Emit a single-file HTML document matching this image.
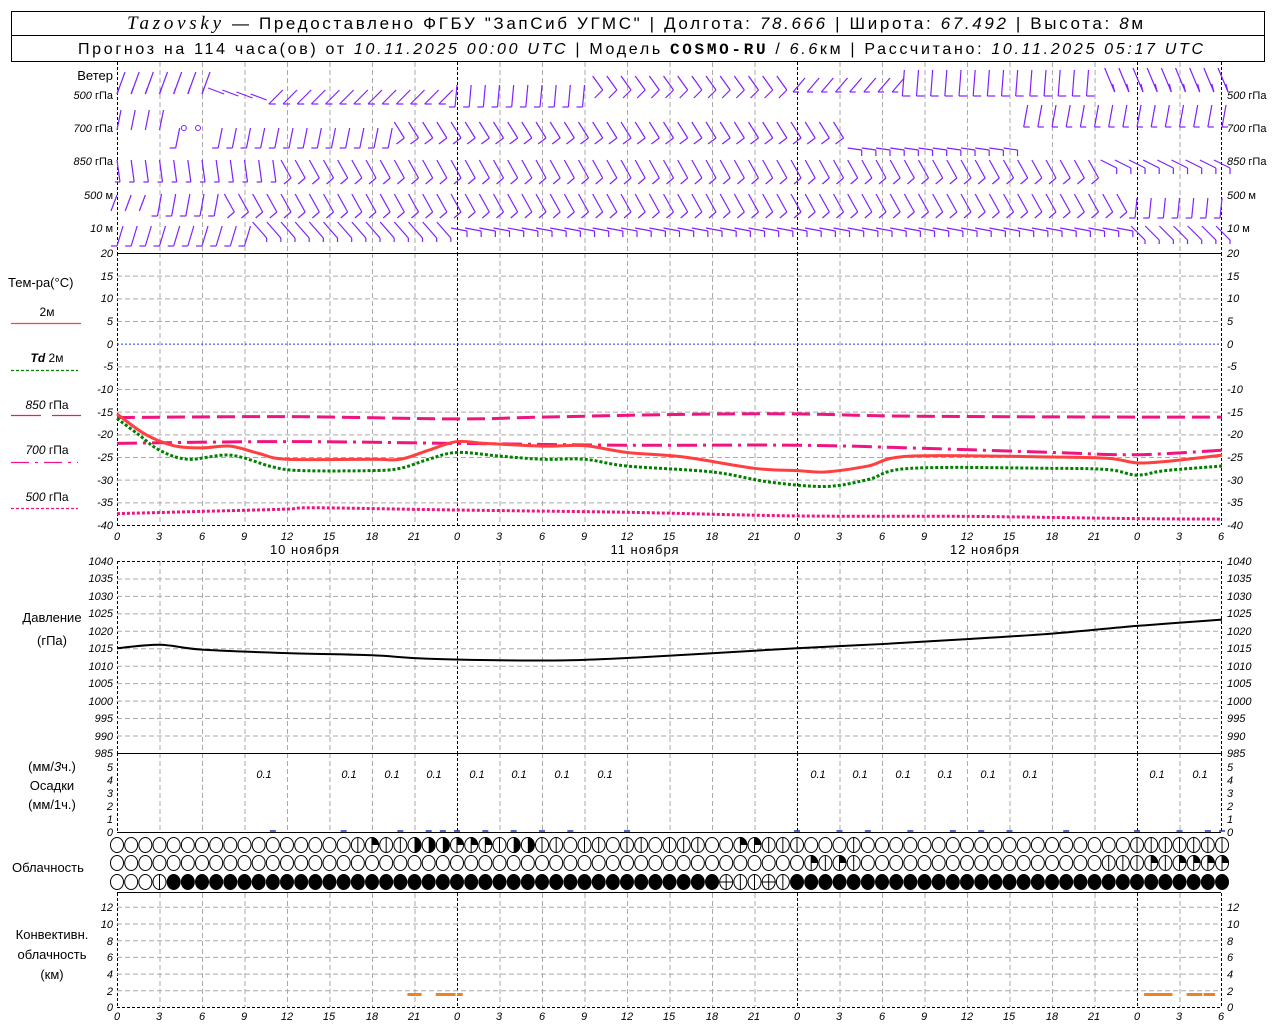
<!DOCTYPE html>
<html><head><meta charset="utf-8"><style>
html,body{margin:0;padding:0;background:#fff;}
svg{display:block;font-family:"Liberation Sans",sans-serif;}
.it{font-style:italic;}
.ax{font-size:11px;font-style:italic;}
.lb{font-size:13px;}
</style></head><body>
<svg id="s" width="1280" height="1024" viewBox="0 0 1280 1024" xmlns="http://www.w3.org/2000/svg">
<rect x="0" y="0" width="1280" height="1024" fill="#fff"/>
<rect x="11.5" y="11.5" width="1253" height="50" fill="none" stroke="#000"/>
<line x1="11" y1="35.5" x2="1265" y2="35.5" stroke="#000"/>
<g font-size="17">
<text x="127" y="29" font-family="Liberation Serif,serif" font-style="italic" font-size="19" textLength="94" lengthAdjust="spacing">Tazovsky</text>
<text x="232" y="29" textLength="911" lengthAdjust="spacing">— Предоставлено ФГБУ "ЗапСиб УГМС" | Долгота: <tspan class="it">78.666</tspan> | Широта: <tspan class="it">67.492</tspan> | Высота: <tspan class="it">8</tspan>м</text>
</g>
<g font-size="16">
<text x="78" y="54" textLength="1125" lengthAdjust="spacing">Прогноз на 114 часа(ов) от <tspan class="it">10.11.2025 00:00 UTC</tspan>  | Модель <tspan font-family="Liberation Mono,monospace" font-weight="bold">COSMO-RU</tspan> / <tspan class="it">6.6</tspan>км | Рассчитано: <tspan class="it">10.11.2025 05:17 UTC</tspan></text>
</g>
<g id="grid"></g>
<g id="data"></g>
<g class="lb">
<text x="113" y="80" text-anchor="end">Ветер</text>
<g class="ax" font-size="12">
<text x="113" y="99" text-anchor="end">500 <tspan font-style="normal">гПа</tspan></text>
<text x="113" y="132" text-anchor="end">700 <tspan font-style="normal">гПа</tspan></text>
<text x="113" y="165" text-anchor="end">850 <tspan font-style="normal">гПа</tspan></text>
<text x="113" y="199" text-anchor="end">500 <tspan font-style="normal">м</tspan></text>
<text x="113" y="232" text-anchor="end">10 <tspan font-style="normal">  м</tspan></text>
<text x="1227" y="99">500 <tspan font-style="normal">гПа</tspan></text>
<text x="1227" y="132">700 <tspan font-style="normal">гПа</tspan></text>
<text x="1227" y="165">850 <tspan font-style="normal">гПа</tspan></text>
<text x="1227" y="199">500 <tspan font-style="normal">м</tspan></text>
<text x="1227" y="232">10 <tspan font-style="normal">  м</tspan></text>
</g>
<text x="8" y="287">Тем-ра(°C)</text>
<text x="47" y="316" font-size="12" text-anchor="middle">2м</text>
<text x="47" y="362" font-size="12" text-anchor="middle"><tspan class="it" font-weight="bold">Td</tspan>  2м</text>
<text x="47" y="409" font-size="12" text-anchor="middle"><tspan class="it">850</tspan> гПа</text>
<text x="47" y="454" font-size="12" text-anchor="middle"><tspan class="it">700</tspan> гПа</text>
<text x="47" y="501" font-size="12" text-anchor="middle"><tspan class="it">500</tspan> гПа</text>
<text x="52" y="622" text-anchor="middle">Давление</text>
<text x="52" y="645" text-anchor="middle">(гПа)</text>
<text x="52" y="771" text-anchor="middle">(мм/<tspan class="it">3</tspan>ч.)</text>
<text x="52" y="790" text-anchor="middle">Осадки</text>
<text x="52" y="809" text-anchor="middle">(мм/1ч.)</text>
<text x="12" y="872">Облачность</text>
<text x="52" y="939" text-anchor="middle">Конвективн.</text>
<text x="52" y="959" text-anchor="middle">облачность</text>
<text x="52" y="979" text-anchor="middle">(км)</text>
<text x="305" y="554" text-anchor="middle" letter-spacing="1">10 ноября</text>
<text x="645" y="554" text-anchor="middle" letter-spacing="1">11 ноября</text>
<text x="985" y="554" text-anchor="middle" letter-spacing="1">12 ноября</text>
</g>
<g stroke-width="1.3">
<line x1="11" y1="323.5" x2="81" y2="323.5" stroke="#ff4040"/>
<line x1="11" y1="370.5" x2="78" y2="370.5" stroke="#008000" stroke-dasharray="3,2"/>
<line x1="11" y1="415.5" x2="41" y2="415.5" stroke="#f01480"/><line x1="52" y1="415.5" x2="81" y2="415.5" stroke="#f01480"/>
<line x1="11" y1="462.5" x2="78" y2="462.5" stroke="#f01480" stroke-dasharray="18,6,3,6"/>
<line x1="11" y1="508.5" x2="78" y2="508.5" stroke="#f01480" stroke-dasharray="3,2"/>
</g>
<g class="ax" font-size="13">
<text x="264" y="778" text-anchor="middle">0.1</text><text x="349" y="778" text-anchor="middle">0.1</text><text x="392" y="778" text-anchor="middle">0.1</text><text x="434" y="778" text-anchor="middle">0.1</text><text x="477" y="778" text-anchor="middle">0.1</text><text x="519" y="778" text-anchor="middle">0.1</text><text x="562" y="778" text-anchor="middle">0.1</text><text x="605" y="778" text-anchor="middle">0.1</text><text x="818" y="778" text-anchor="middle">0.1</text><text x="860" y="778" text-anchor="middle">0.1</text><text x="903" y="778" text-anchor="middle">0.1</text><text x="945" y="778" text-anchor="middle">0.1</text><text x="988" y="778" text-anchor="middle">0.1</text><text x="1030" y="778" text-anchor="middle">0.1</text><text x="1157" y="778" text-anchor="middle">0.1</text><text x="1200" y="778" text-anchor="middle">0.1</text>
</g>
<g class="ax" font-size="14">
<text x="117" y="540" text-anchor="middle">0</text><text x="159" y="540" text-anchor="middle">3</text><text x="202" y="540" text-anchor="middle">6</text><text x="244" y="540" text-anchor="middle">9</text><text x="287" y="540" text-anchor="middle">12</text><text x="329" y="540" text-anchor="middle">15</text><text x="372" y="540" text-anchor="middle">18</text><text x="414" y="540" text-anchor="middle">21</text><text x="457" y="540" text-anchor="middle">0</text><text x="499" y="540" text-anchor="middle">3</text><text x="542" y="540" text-anchor="middle">6</text><text x="584" y="540" text-anchor="middle">9</text><text x="627" y="540" text-anchor="middle">12</text><text x="669" y="540" text-anchor="middle">15</text><text x="712" y="540" text-anchor="middle">18</text><text x="754" y="540" text-anchor="middle">21</text><text x="797" y="540" text-anchor="middle">0</text><text x="839" y="540" text-anchor="middle">3</text><text x="882" y="540" text-anchor="middle">6</text><text x="924" y="540" text-anchor="middle">9</text><text x="967" y="540" text-anchor="middle">12</text><text x="1009" y="540" text-anchor="middle">15</text><text x="1052" y="540" text-anchor="middle">18</text><text x="1094" y="540" text-anchor="middle">21</text><text x="1137" y="540" text-anchor="middle">0</text><text x="1179" y="540" text-anchor="middle">3</text><text x="1221" y="540" text-anchor="middle">6</text>
<text x="117" y="1020" text-anchor="middle">0</text><text x="159" y="1020" text-anchor="middle">3</text><text x="202" y="1020" text-anchor="middle">6</text><text x="244" y="1020" text-anchor="middle">9</text><text x="287" y="1020" text-anchor="middle">12</text><text x="329" y="1020" text-anchor="middle">15</text><text x="372" y="1020" text-anchor="middle">18</text><text x="414" y="1020" text-anchor="middle">21</text><text x="457" y="1020" text-anchor="middle">0</text><text x="499" y="1020" text-anchor="middle">3</text><text x="542" y="1020" text-anchor="middle">6</text><text x="584" y="1020" text-anchor="middle">9</text><text x="627" y="1020" text-anchor="middle">12</text><text x="669" y="1020" text-anchor="middle">15</text><text x="712" y="1020" text-anchor="middle">18</text><text x="754" y="1020" text-anchor="middle">21</text><text x="797" y="1020" text-anchor="middle">0</text><text x="839" y="1020" text-anchor="middle">3</text><text x="882" y="1020" text-anchor="middle">6</text><text x="924" y="1020" text-anchor="middle">9</text><text x="967" y="1020" text-anchor="middle">12</text><text x="1009" y="1020" text-anchor="middle">15</text><text x="1052" y="1020" text-anchor="middle">18</text><text x="1094" y="1020" text-anchor="middle">21</text><text x="1137" y="1020" text-anchor="middle">0</text><text x="1179" y="1020" text-anchor="middle">3</text><text x="1221" y="1020" text-anchor="middle">6</text>
</g>
<g class="ax">
<text x="113" y="257" text-anchor="end">20</text><text x="113" y="280" text-anchor="end">15</text><text x="113" y="302" text-anchor="end">10</text><text x="113" y="325" text-anchor="end">5</text><text x="113" y="348" text-anchor="end">0</text><text x="113" y="370" text-anchor="end">-5</text><text x="113" y="393" text-anchor="end">-10</text><text x="113" y="416" text-anchor="end">-15</text><text x="113" y="438" text-anchor="end">-20</text><text x="113" y="461" text-anchor="end">-25</text><text x="113" y="484" text-anchor="end">-30</text><text x="113" y="506" text-anchor="end">-35</text><text x="113" y="529" text-anchor="end">-40</text>
<text x="1227" y="257">20</text><text x="1227" y="280">15</text><text x="1227" y="302">10</text><text x="1227" y="325">5</text><text x="1227" y="348">0</text><text x="1227" y="370">-5</text><text x="1227" y="393">-10</text><text x="1227" y="416">-15</text><text x="1227" y="438">-20</text><text x="1227" y="461">-25</text><text x="1227" y="484">-30</text><text x="1227" y="506">-35</text><text x="1227" y="529">-40</text>
<text x="113" y="565" text-anchor="end">1040</text><text x="113" y="582" text-anchor="end">1035</text><text x="113" y="600" text-anchor="end">1030</text><text x="113" y="617" text-anchor="end">1025</text><text x="113" y="635" text-anchor="end">1020</text><text x="113" y="652" text-anchor="end">1015</text><text x="113" y="670" text-anchor="end">1010</text><text x="113" y="687" text-anchor="end">1005</text><text x="113" y="705" text-anchor="end">1000</text><text x="113" y="722" text-anchor="end">995</text><text x="113" y="740" text-anchor="end">990</text><text x="113" y="757" text-anchor="end">985</text>
<text x="1227" y="565">1040</text><text x="1227" y="582">1035</text><text x="1227" y="600">1030</text><text x="1227" y="617">1025</text><text x="1227" y="635">1020</text><text x="1227" y="652">1015</text><text x="1227" y="670">1010</text><text x="1227" y="687">1005</text><text x="1227" y="705">1000</text><text x="1227" y="722">995</text><text x="1227" y="740">990</text><text x="1227" y="757">985</text>
<text x="113" y="771" text-anchor="end">5</text><text x="113" y="784" text-anchor="end">4</text><text x="113" y="797" text-anchor="end">3</text><text x="113" y="810" text-anchor="end">2</text><text x="113" y="823" text-anchor="end">1</text><text x="113" y="836" text-anchor="end">0</text>
<text x="1227" y="771">5</text><text x="1227" y="784">4</text><text x="1227" y="797">3</text><text x="1227" y="810">2</text><text x="1227" y="823">1</text><text x="1227" y="836">0</text>
<text x="113" y="911" text-anchor="end">12</text><text x="113" y="928" text-anchor="end">10</text><text x="113" y="945" text-anchor="end">8</text><text x="113" y="961" text-anchor="end">6</text><text x="113" y="978" text-anchor="end">4</text><text x="113" y="995" text-anchor="end">2</text><text x="113" y="1011" text-anchor="end">0</text>
<text x="1227" y="911">12</text><text x="1227" y="928">10</text><text x="1227" y="945">8</text><text x="1227" y="961">6</text><text x="1227" y="978">4</text><text x="1227" y="995">2</text><text x="1227" y="1011">0</text>
</g>
</svg>
<script>
(function(){
var NS="http://www.w3.org/2000/svg";
var G=document.getElementById("grid"),D=document.getElementById("data");
function el(p,t,a){var e=document.createElementNS(NS,t);for(var k in a)e.setAttribute(k,a[k]);p.appendChild(e);return e;}
function X(h){return 117+h*14.167;}
function ln(p,x1,y1,x2,y2,c,w,da){var a={x1:x1,y1:y1,x2:x2,y2:y2,stroke:c,"stroke-width":w||1};if(da)a["stroke-dasharray"]=da;return el(p,"line",a);}
var panels=[[62,253],[253,525],[561,753],[753,832],[893,1007]];
panels.forEach(function(p){
 for(var h=3;h<78;h+=3){var day=(h%24==0);ln(G,X(h)+.5,p[0],X(h)+.5,p[1],day?"#000":"#aaa",1,day?"3,2":"5,3");}
 ln(G,117.5,p[0],117.5,p[1],"#000",1,"3,2");ln(G,1221.5,p[0],1221.5,p[1],"#000",1,"3,2");
});
function T(v){return 253+(20-v)*4.533;}
for(var v=15;v>=-35;v-=5){if(v==0)ln(G,117,T(0)+.5,1221,T(0)+.5,"#2040ff",1,"2,2");else ln(G,117,T(v)+.5,1221,T(v)+.5,"#aaa",1,"5,3");}
function P(v){return 561+(1040-v)*3.49;}
for(v=1035;v>985;v-=5)ln(G,117,P(v)+.5,1221,P(v)+.5,"#aaa",1,"5,3");
function C(v){return 1007-v*8.35;}
for(v=2;v<=12;v+=2)ln(G,117,C(v)+.5,1221,C(v)+.5,"#aaa",1,"5,3");
ln(G,117,253.5,1221,253.5,"#000",1);ln(G,117,525.5,1221,525.5,"#000",1,"3,2");
ln(G,117,561.5,1221,561.5,"#000",1,"3,2");ln(G,117,753.5,1221,753.5,"#000",1);
ln(G,117,832.5,1221,832.5,"#000",1);ln(G,117,892.5,1221,892.5,"#000",1);ln(G,117,1007.5,1221,1007.5,"#000",1,"3,2");
function curve(pts,fy,attrs){var n=pts.length;
 var P2=pts.map(function(p){return [X(p[0]),fy(p[1])];});
 var d="M"+P2[0][0]+","+P2[0][1];
 for(var i=0;i<n-1;i++){var p0=P2[Math.max(i-1,0)],p1=P2[i],p2=P2[i+1],p3=P2[Math.min(i+2,n-1)];
  d+=" C"+(p1[0]+(p2[0]-p0[0])/6)+","+(p1[1]+(p2[1]-p0[1])/6)+" "+(p2[0]-(p3[0]-p1[0])/6)+","+(p2[1]-(p3[1]-p1[1])/6)+" "+p2[0]+","+p2[1];}
 attrs.d=d;attrs.fill="none";el(D,"path",attrs);}
var pink="#f01480";
curve([[0,-16.3],[12,-16.1],[24,-16.6],[30,-16.2],[40,-15.6],[48,-15.5],[56,-16],[72,-16.2],[78,-16.2]],T,{stroke:pink,"stroke-width":3,"stroke-dasharray":"18,7"});
curve([[0,-22],[12,-21.6],[24,-22],[36,-22.4],[48,-22.4],[56,-23],[66,-24],[72,-24.5],[78,-23.5]],T,{stroke:pink,"stroke-width":3,"stroke-dasharray":"20,6,3,6"});
curve([[0,-37.5],[6,-37],[12,-36.5],[14,-36.2],[24,-36.7],[36,-37.2],[48,-38],[60,-38.1],[72,-38.6],[78,-38.7]],T,{stroke:pink,"stroke-width":3,"stroke-dasharray":"3,2"});
curve([[0,-16.5],[1.5,-20],[3,-23.5],[5,-25.5],[8,-24.6],[11,-27.2],[13,-28],[18,-28],[20,-27.5],[22,-25.5],[24,-24],[27,-24.8],[30,-25.5],[33,-25.5],[36,-27],[42,-28.3],[46,-30.5],[50,-31.5],[53,-30],[56,-27.5],[66,-27.5],[70,-27.8],[72,-29],[74,-28],[78,-27]],T,{stroke:"#008000","stroke-width":3,"stroke-dasharray":"3,2"});
curve([[0,-15.5],[2,-20],[4,-22.5],[6,-23],[8,-22.6],[10,-24.2],[12,-25.5],[18,-25.5],[20,-25.5],[22,-23.5],[24,-21.6],[26,-22],[30,-22.6],[33,-22.5],[36,-24],[40,-25],[45,-27.5],[48,-28],[50,-28.3],[53,-27],[56,-24.8],[66,-25],[70,-25.3],[72,-26.3],[74,-26],[78,-24.6]],T,{stroke:"#ff4040","stroke-width":3});
curve([[0,1015],[3,1016],[6,1014.6],[12,1013.6],[18,1013],[22,1012],[30,1011.5],[36,1012.2],[48,1015],[54,1016.2],[60,1017.6],[66,1019.2],[72,1021.4],[78,1023.2]],P,{stroke:"#000","stroke-width":2});
[11,16,20,22,23,24,26,28,30,32,36,48,51,53,56,59,61,63,67,72,75,77,78].forEach(function(h){ln(D,X(h)-3,831,X(h)+3,831,"#2030c0",1.5);});
[[20.5,21.5],[22.5,23.9],[24,24.4],[72.5,74.5],[75.5,76.6],[76.7,77.5]].forEach(function(b){el(D,"rect",{x:X(b[0]),y:993,width:X(b[1])-X(b[0]),height:3,fill:"#f08020"});});
function mk(def,map){var a=[];for(var i=0;i<79;i++)a.push(def);for(var k in map)map[k].forEach(function(i){a[i]=k;});return a;}
var r1=mk("o",{"|":[17,19,20,27,30,31,33,34,36,37,39,40,41,46,47,48,52,72,73,74,75,76,77,78],"q":[18,24,25,26,44,45],"h":[21,22,23,28,29]});
var r2=mk("o",{"q":[49,51,73,75,76,77,78],"|":[50,52,70,71,72,74]});
var r3=mk("f",{"o":[0,1,2],"|":[3,44,45,47],"+":[43,46]});
[[r1,845],[r2,863],[r3,882]].forEach(function(r){
 for(var i=0;i<79;i++){var c=r[0][i],cx=X(i),cy=r[1],rx=7,ry=8;
  if(c=="f"){el(D,"ellipse",{cx:cx,cy:cy,rx:rx,ry:ry,fill:"#000"});continue;}
  if(c=="h"){el(D,"path",{d:"M"+cx+","+(cy-ry)+" A"+rx+","+ry+" 0 0 1 "+cx+","+(cy+ry)+"Z",fill:"#000"});}
  if(c=="q"){el(D,"path",{d:"M"+cx+","+cy+" L"+cx+","+(cy-ry)+" A"+rx+","+ry+" 0 0 1 "+(cx+rx)+","+cy+"Z",fill:"#000"});}
  el(D,"ellipse",{cx:cx,cy:cy,rx:rx-.5,ry:ry-.5,fill:"none",stroke:"#000","stroke-width":1});
  if(c=="|"||c=="q"||c=="+")ln(D,cx,cy-ry,cx,cy+ry,"#000",1);
  if(c=="+")ln(D,cx-rx,cy,cx+rx,cy,"#000",1);
 }});
var pu="#8020ff";
function barb(x,yt,dx,dy,fx,fy){ln(D,x,yt,x+dx,yt+dy,pu,1.2);if(fx!==undefined)ln(D,x+dx,yt+dy,x+dx+fx,yt+dy+fy,pu,1.2);}
for(var i=0;i<=78;i++){var x=X(i);
 if(i<7)barb(x+8,72,-8,22,2,-6);
 else if(i<11)barb(x-8,88+(i-7)*2,16,6);
 else if(i<24)barb(x+10,90,-14,14,7,0);
 else if(i<34)barb(x,85,-2,22,-6,0);
 else if(i<48)barb(x-6,76,10,14,-8,8);
 else if(i<56)barb(x+8,78,-12,14,6,0);
 else if(i<70)barb(x-6,70,-2,26,8,0);
 else barb(x-4,68,10,24,-2,-8);
 if(i<4)barb(x+4,110,-4,20);
 else if(i==5||i==6)el(D,"circle",{cx:x-4,cy:128,r:2.5,fill:"none",stroke:pu});
 else if(i<20)barb(x+6,128,-4,20,-6,0);
 else if(i<52)barb(x-6,122,10,16,-8,6);
 else if(i<64)barb(x-6,148,14,2,0,6);
 else barb(x+4,105,-4,22,6,0);
 if(i<12)barb(x,160,3,22,-5,0);
 else if(i<70)barb(x-6,160,10,18,-7,6);
 else barb(x-8,160,16,8,0,6);
 if(i<3)barb(x,195,-6,16);
 else if(i<8)barb(x+2,194,-4,22,-6,0);
 else if(i<72)barb(x-6,194,10,18,-7,6);
 else barb(x,198,-2,20,-6,0);
 if(i<10)barb(x+6,226,-6,20,-6,0);
 else if(i<24)barb(x-6,222,14,16,0,4);
 else if(i<72)barb(x-6,228,16,3,0,6);
 else barb(x-6,226,14,14,0,4);
}
})();
</script>
</body></html>
